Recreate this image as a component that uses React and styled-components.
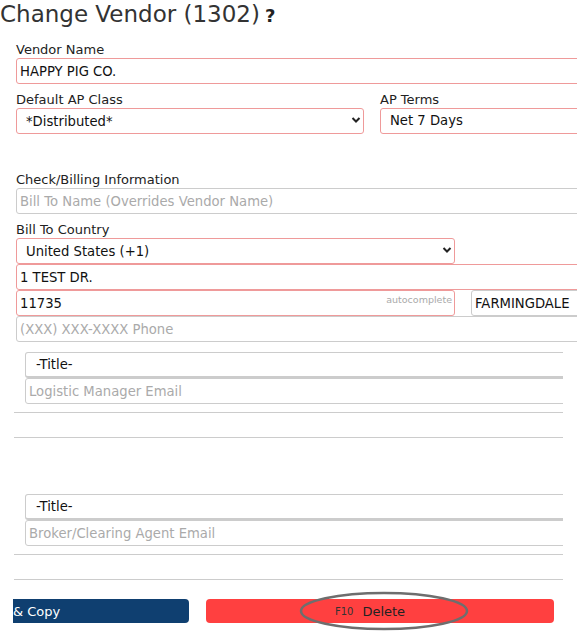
import React from 'react'
import styled, { createGlobalStyle } from 'styled-components'

const Global = createGlobalStyle`
  html, body { margin: 0; padding: 0; background: #fff; }
  body {
    font-family: "DejaVu Sans", Verdana, sans-serif;
    color: #222;
    overflow: hidden;
  }
  * { box-sizing: border-box; }
  input::placeholder { color: #aaa; opacity: 1; }
`

const Page = styled.div`
  width: 577px;
  height: 632px;
  overflow: hidden;
  position: relative;
`

const Title = styled.h1`
  margin: 0;
  padding: 0;
  font-weight: normal;
  font-size: 23px;
  line-height: 28px;
  color: #333;
  white-space: nowrap;
`

const Help = styled.span`
  font-weight: bold;
  font-size: 18px;
  margin-left: 5px;
  color: #222;
`

const Form = styled.div`
  width: 660px;
  padding: 11px 0 0 16px;
`

const Label = styled.div`
  font-size: 13px;
  line-height: 17px;
  margin-top: ${p => p.$top || 0}px;
  white-space: nowrap;
`

const borderColor = p => (p.$required ? '#ef9a9a' : '#ccc')

const Input = styled.input`
  display: block;
  width: ${p => p.$w || '100%'};
  height: 26px;
  margin: 0;
  padding: 0 3px;
  border: 1px solid ${borderColor};
  border-radius: 3px;
  font-family: inherit;
  font-size: 13.2px;
  color: #111;
  background: #fff;
  outline: none;
`

const SelectWrap = styled.div`
  position: relative;
  width: ${p => p.$w || '100%'};
`

const Select = styled.select`
  display: block;
  width: 100%;
  height: 26px;
  margin: 0;
  padding: 0 0 0 ${p => p.$pad || 9}px;
  border: 1px solid ${borderColor};
  ${p => p.$thick && 'border-bottom-width: 2px;'}
  border-radius: 3px;
  font-family: inherit;
  font-size: 13.2px;
  color: #111;
  background: #fff;
  appearance: none;
  outline: none;
`

const Chevron = styled.svg`
  position: absolute;
  right: 3px;
  top: 8px;
  pointer-events: none;
`

const Row = styled.div`
  display: flex;
  gap: ${p => p.$gap || 16}px;
  align-items: flex-start;
`

const Col = styled.div`
  width: ${p => p.$w || 'auto'};
  flex: ${p => (p.$grow ? 1 : 'none')};
`

const Spacer = styled.div`
  height: ${p => p.$h}px;
`

const ZipBox = styled.div`
  position: relative;
  width: 439px;
`

const Hint = styled.span`
  position: absolute;
  right: 3px;
  top: 4px;
  font-size: 9.5px;
  color: #aaa;
`

const ContactClip = styled.div`
  width: 538px;
  margin-left: 9px;
  overflow: hidden;
`

const ContactInner = styled.div`
  width: 600px;
`

const Rule = styled.div`
  width: 549px;
  margin-left: -2px;
  border-top: 1px solid #ccc;
  margin-top: ${p => p.$top}px;
`

const Buttons = styled.div`
  display: flex;
  gap: 17px;
  margin: 19px 0 0 -2px;
  position: relative;
`

const Button = styled.button`
  height: 24px;
  border: none;
  padding: 0;
  font-family: inherit;
  font-size: 13px;
  display: flex;
  align-items: center;
`

const CopyButton = styled(Button)`
  width: 176px;
  background: #0f3f70;
  color: #fff;
  border-radius: 0 4px 4px 0;
  justify-content: flex-start;
  margin-left: -1px;
`

const DeleteButton = styled(Button)`
  width: 348px;
  background: #ff4040;
  color: #222;
  border-radius: 4px;
  justify-content: center;
  padding-right: 20px;
`

const Key = styled.span`
  font-size: 10px;
  margin-right: 9px;
  color: #333;
`

const Ring = styled.svg`
  position: absolute;
  left: 284px;
  top: -9px;
  pointer-events: none;
`

function Arrow() {
  return (
    <Chevron width="10" height="8" viewBox="0 0 10 8">
      <path d="M1.5 2 L5 5.5 L8.5 2" fill="none" stroke="#222" strokeWidth="2" />
    </Chevron>
  )
}

function Contact({ placeholder }) {
  return (
    <ContactClip>
      <ContactInner>
        <Select $pad={10} $thick defaultValue="t">
          <option value="t">-Title-</option>
        </Select>
        <Input placeholder={placeholder} />
      </ContactInner>
    </ContactClip>
  )
}

export default function App() {
  return (
    <Page>
      <Global />
      <Title>
        Change Vendor (1302)<Help>?</Help>
      </Title>
      <Form>
        <Label>Vendor Name</Label>
        <Input $required defaultValue="HAPPY PIG CO." />

        <Row>
          <Col $w="348px">
            <Label $top={7}>Default AP Class</Label>
            <SelectWrap>
              <Select $required defaultValue="d">
                <option value="d">*Distributed*</option>
              </Select>
              <Arrow />
            </SelectWrap>
          </Col>
          <Col $grow>
            <Label $top={7}>AP Terms</Label>
            <Select $required as="div" style={{ lineHeight: '24px' }}>Net 7 Days</Select>
          </Col>
        </Row>

        <Spacer $h={37} />
        <Label>Check/Billing Information</Label>
        <Input placeholder="Bill To Name (Overrides Vendor Name)" />

        <Label $top={7}>Bill To Country</Label>
        <SelectWrap $w="439px">
          <Select $required defaultValue="us">
            <option value="us">United States (+1)</option>
          </Select>
          <Arrow />
        </SelectWrap>
        <Input $required defaultValue="1 TEST DR." />
        <Row>
          <ZipBox>
            <Input $required defaultValue="11735" />
            <Hint>autocomplete</Hint>
          </ZipBox>
          <Col $grow>
            <Input defaultValue="FARMINGDALE" />
          </Col>
        </Row>
        <Input placeholder="(XXX) XXX-XXXX Phone" />

        <Spacer $h={10} />
        <Contact placeholder="Logistic Manager Email" />
        <Rule $top={8} />
        <Rule $top={24} />

        <Spacer $h={56} />
        <Contact placeholder="Broker/Clearing Agent Email" />
        <Rule $top={8} />
        <Rule $top={24} />

        <Buttons>
          <CopyButton>&amp; Copy</CopyButton>
          <DeleteButton>
            <Key>F10</Key>Delete
          </DeleteButton>
          <Ring width="172" height="42" viewBox="0 0 172 42">
            <ellipse cx="86" cy="21" rx="83" ry="18" fill="none" stroke="#6e6e6e" strokeWidth="2.5" />
          </Ring>
        </Buttons>
      </Form>
    </Page>
  )
}
